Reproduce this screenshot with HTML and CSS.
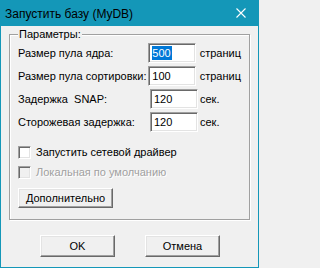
FILE: index.html
```html
<!DOCTYPE html>
<html lang="ru">
<head>
<meta charset="utf-8">
<title>Запустить базу (MyDB)</title>
<link rel="stylesheet" href="styles.css">
</head>
<body>
<div class="window">
  <div class="titlebar">
    <span class="title">Запустить базу (MyDB)</span>
    <svg class="close" width="10" height="10" viewBox="0 0 10 10"><path d="M0.5 0.5 L9.5 9.5 M9.5 0.5 L0.5 9.5" stroke="#fff" stroke-width="1.1" fill="none"/></svg>
  </div>
  <div class="client">
    <fieldset class="group">
      <legend class="legend">Параметры:</legend>
      <div class="fields">
        <div class="row"><span class="label">Размер пула ядра:</span><span class="edit"><span class="sel">500</span></span><span class="unit">страниц</span></div>
        <div class="row"><span class="label">Размер пула сортировки:</span><span class="edit">100</span><span class="unit">страниц</span></div>
        <div class="row"><span class="label">Задержка&nbsp; SNAP:</span><span class="edit">120</span><span class="unit unit-sec">сек.</span></div>
        <div class="row"><span class="label">Сторожевая задержка:</span><span class="edit">120</span><span class="unit unit-sec">сек.</span></div>
      </div>
      <div class="checks">
        <div class="check"><span class="box"></span><span>Запустить сетевой драйвер</span></div>
        <div class="check disabled"><span class="box"></span><span class="dis-text">Локальная по умолчанию</span></div>
      </div>
      <div class="btn btn-more">Дополнительно</div>
    </fieldset>
    <div class="actions">
      <div class="btn btn-main">OK</div>
      <div class="btn btn-main">Отмена</div>
    </div>
  </div>
</div>
</body>
</html>
```
FILE: styles.css
```css
* { box-sizing: border-box; }
html, body { margin: 0; padding: 0; }
body {
  width: 259px;
  height: 268px;
  overflow: hidden;
  font-family: "Liberation Sans", Arial, sans-serif;
  font-size: 11px;
  color: #000;
  background: #f0f0f0;
}
.window {
  width: 259px;
  height: 268px;
  border: 1px solid #1497b8;
  border-top: 0;
  background: #f0f0f0;
  display: flex;
  flex-direction: column;
}
.titlebar {
  height: 26px;
  margin: 0 -1px;
  background: #1497b8;
  display: flex;
  align-items: center;
  justify-content: space-between;
  padding: 0 13px 0 5px;
}
.title {
  font-family: "Liberation Sans", Arial, sans-serif;
  font-size: 12px;
  color: #000;
  margin-top: 1px;
}
.close { display: block; }
.client {
  flex: 1;
  display: flex;
  flex-direction: column;
}
.group {
  margin: 2px 8px 0 8px;
  padding: 2px 8px 11px 8px;
  border: 1px solid #a0a0a0;
  box-shadow: inset 1px 1px 0 #fff, 1px 1px 0 #fff;
  min-width: 0;
}
.legend {
  padding: 0 1px;
  margin-left: 0;
  line-height: 13px;
  background: #f0f0f0;
}
.fields {
  display: flex;
  flex-direction: column;
  gap: 3px;
}
.row {
  display: flex;
  align-items: center;
  height: 20px;
}
.label { width: 132px; white-space: nowrap; }
.edit {
  width: 48px;
  height: 20px;
  background: #fff;
  border: 1px solid;
  border-color: #a0a0a0 #fff #fff #a0a0a0;
  box-shadow: inset 1px 1px 0 #696969, inset -1px -1px 0 #e3e3e3;
  padding: 2px 0 0 3px;
  line-height: 14px;
}
.sel {
  display: inline-block;
  background: #0078d7;
  color: #fff;
  padding: 0 1px 0 0;
}
.unit { margin-left: 4px; }
.unit-sec { margin-left: 2px; }
.checks {
  margin-top: 10px;
  display: flex;
  flex-direction: column;
}
.check {
  height: 20px;
  display: flex;
  align-items: center;
  gap: 5px;
}
.box {
  width: 13px;
  height: 13px;
  background: #fff;
  border: 1px solid;
  border-color: #a0a0a0 #fff #fff #a0a0a0;
  box-shadow: inset 1px 1px 0 #696969, inset -1px -1px 0 #e3e3e3;
}
.disabled .box { background: #f0f0f0; }
.dis-text { color: #a0a0a0; text-shadow: 1px 1px 0 #fff; }
.btn {
  display: flex;
  align-items: center;
  justify-content: center;
  background: #f0f0f0;
  border: 1px solid;
  border-color: #fff #696969 #696969 #fff;
  box-shadow: inset -1px -1px 0 #a0a0a0, inset 1px 1px 0 #e3e3e3;
}
.btn-more {
  margin-top: 6px;
  width: 95px;
  height: 20px;
}
.actions {
  margin-top: 15px;
  display: flex;
  justify-content: center;
  gap: 30px;
  padding-left: 1px;
}
.btn-main {
  width: 75px;
  height: 22px;
}
```
